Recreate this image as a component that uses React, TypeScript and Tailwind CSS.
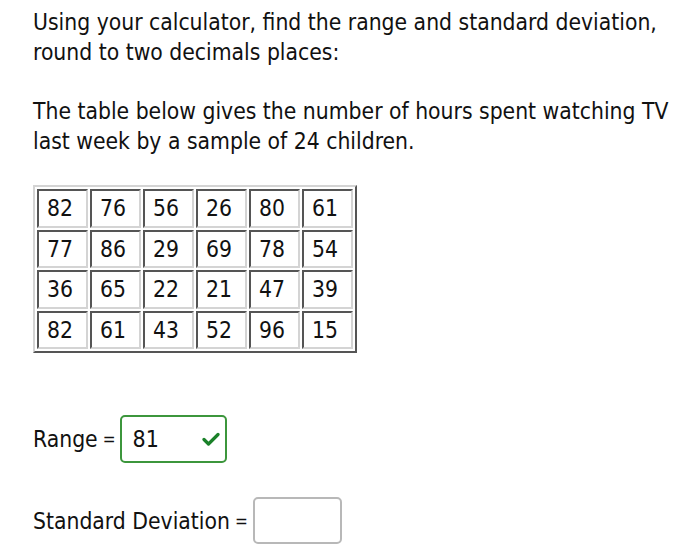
import React from "react";

const rows = [
  ["82", "76", "56", "26", "80", "61"],
  ["77", "86", "29", "69", "78", "54"],
  ["36", "65", "22", "21", "47", "39"],
  ["82", "61", "43", "52", "96", "15"],
];

function Check() {
  return (
    <svg width="18" height="14" viewBox="0 0 18 14" fill="none">
      <path
        d="M2 7.5 L6.5 12 L16 2.5"
        stroke="#1a8129"
        strokeWidth="3.2"
        strokeLinecap="round"
        strokeLinejoin="round"
      />
    </svg>
  );
}

export default function App() {
  return (
    <div
      className="h-[557px] w-[700px] bg-white pl-[33px] pt-[7px] text-[22.7px] leading-[30px] text-[#111]"
      style={{ fontFamily: '"DejaVu Sans Condensed", "DejaVu Sans", sans-serif' }}
    >
      <p>
        Using your calculator, find the range and standard deviation,
        <br />
        round to two decimals places:
      </p>
      <p className="mt-[29px]">
        The table below gives the number of hours spent watching TV
        <br />
        last week by a sample of 24 children.
      </p>

      <table className="mt-[29px] border-separate border-spacing-[2px] border-2 border-t-[#d4d4d4] border-l-[#d4d4d4] border-b-[#555] border-r-[#555]">
        <tbody>
          {rows.map((row, i) => (
            <tr key={i}>
              {row.map((v, j) => (
                <td
                  key={j}
                  className="h-[38.5px] w-[51px] border-2 border-t-[#555] border-l-[#555] border-b-[#d4d4d4] border-r-[#d4d4d4] pl-[8px] align-middle"
                >
                  {v}
                </td>
              ))}
            </tr>
          ))}
        </tbody>
      </table>

      <div className="mt-[62px] flex items-center">
        <span>Range</span>
        <span className="ml-[5px] mr-[5px] text-[17px]">=</span>
        <div className="flex h-[48px] w-[107px] items-center justify-between rounded-[5px] border-2 border-[#3c963c] pl-[10px] pr-[5px]">
          <span className="text-[23px]">81</span>
          <Check />
        </div>
      </div>

      <div className="mt-[34px] flex items-center">
        <span>Standard Deviation</span>
        <span className="ml-[5px] mr-[5px] text-[17px]">=</span>
        <div className="h-[47px] w-[89px] rounded-[5px] border-2 border-[#b8b8b8]" />
      </div>
    </div>
  );
}
